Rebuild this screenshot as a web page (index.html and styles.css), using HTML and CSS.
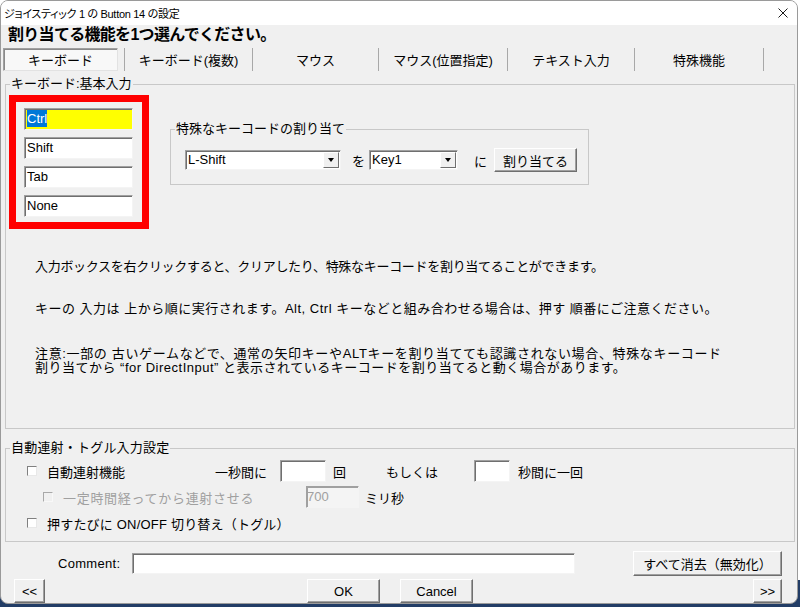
FILE: index.html
```html
<!DOCTYPE html>
<html lang="ja">

<head>
    <meta charset="UTF-8">
    <title>ジョイスティック 1 の Button 14 の設定</title>
    <link rel="stylesheet" href="styles.css">
</head>

<body>
    <div class="window">
        <div class="titlebar">
            <span class="title">ジョイスティック 1 の Button 14 の設定</span>
            <svg class="close" width="10" height="10" viewBox="0 0 10 10">
                <path d="M0.5 0.5 L9.5 9.5 M9.5 0.5 L0.5 9.5" stroke="#1a1a1a" stroke-width="1" fill="none" />
            </svg>
        </div>
        <div class="client">
            <h1 class="lead">割り当てる機能を1つ選んでください。</h1>
            <div class="tabs">
                <div class="tab selected"><span>キーボード</span></div>
                <div class="tab"><span>キーボード(複数)</span></div>
                <div class="tab"><span>マウス</span></div>
                <div class="tab"><span>マウス(位置指定)</span></div>
                <div class="tab"><span>テキスト入力</span></div>
                <div class="tab"><span>特殊機能</span></div>
            </div>

            <fieldset class="group main">
                <legend>キーボード:基本入力</legend>
                <div class="top_row">
                    <div class="keys">
                        <div class="field key hl"><span class="sel">Ctrl</span></div>
                        <div class="field key">Shift</div>
                        <div class="field key">Tab</div>
                        <div class="field key">None</div>
                    </div>
                    <fieldset class="group special">
                        <legend>特殊なキーコードの割り当て</legend>
                        <div class="assign">
                            <div class="field combo wide">L-Shift<span class="drop"><i></i></span></div>
                            <span class="wo">を</span>
                            <div class="field combo narrow">Key1<span class="drop"><i></i></span></div>
                            <span class="ni">に</span>
                            <button class="btn assign_btn">割り当てる</button>
                        </div>
                    </fieldset>
                </div>
                <p class="note n1">入力ボックスを右クリックすると、クリアしたり、特殊なキーコードを割り当てることができます。</p>
                <p class="note n2">キーの 入力は 上から順に実行されます。Alt, Ctrl キーなどと組み合わせる場合は、押す 順番にご注意ください。</p>
                <p class="note n3">注意:一部の 古いゲームなどで、通常の矢印キーやALTキーを割り当てても認識されない場合、特殊なキーコード<br><span class="tail">割り当てから “for DirectInput” と表示されているキーコードを割り当てると動く場合があります。</span></p>
            </fieldset>

            <fieldset class="group rapid">
                <legend>自動連射・トグル入力設定</legend>
                <div class="rrow">
                    <label class="chk c1"><span class="cb"></span>自動連射機能</label>
                    <span class="per_sec">一秒間に</span>
                    <div class="field num n_a"></div>
                    <span class="kai">回</span>
                    <span class="or">もしくは</span>
                    <div class="field num n_b"></div>
                    <span class="once">秒間に一回</span>
                </div>
                <div class="rrow">
                    <label class="chk c2 off"><span class="cb"></span>一定時間経ってから連射させる</label>
                    <div class="field num n_c off">700</div>
                    <span class="ms">ミリ秒</span>
                </div>
                <div class="rrow">
                    <label class="chk c3"><span class="cb"></span>押すたびに ON/OFF 切り替え（トグル）</label>
                </div>
            </fieldset>

            <div class="comment_row">
                <span class="comment_label">Comment:</span>
                <div class="field comment"></div>
                <button class="btn clear_btn">すべて消去（無効化）</button>
            </div>
            <div class="nav_row">
                <button class="btn prev">&lt;&lt;</button>
                <button class="btn ok">OK</button>
                <button class="btn cancel">Cancel</button>
                <button class="btn next">&gt;&gt;</button>
            </div>
        </div>
    </div>
</body>

</html>
```

FILE: styles.css
```css
* {
    margin: 0;
    padding: 0;
    box-sizing: border-box;
}

html,
body {
    width: 800px;
    height: 607px;
    overflow: hidden;
}

body {
    background: linear-gradient(to bottom, #ffffff 0, #ffffff 580px, #223d66 580px);
    font-family: "Liberation Sans", "Noto Sans CJK JP", sans-serif;
    font-size: 13px;
    color: #000;
}

.window {
    width: 798px;
    height: 604px;
    border: 1px solid #9a9a9a;
    border-radius: 8px;
    overflow: hidden;
    background: #f0f0f0;
    display: flex;
    flex-direction: column;
}

.titlebar {
    height: 24px;
    flex: none;
    background: #fff;
    display: flex;
    align-items: center;
    justify-content: space-between;
    padding: 0 9px 0 3px;
    font-size: 11px;
    letter-spacing: -0.3px;
    font-feature-settings: "palt";
}

.lead {
    font-size: 16px;
    font-weight: bold;
    line-height: 20px;
    padding-left: 7px;
    letter-spacing: -0.7px;
}

/* tabs */
.tabs {
    display: grid;
    grid-template-columns: 124px 128px 126px 129px 127px 129px;
    height: 23px;
    margin-top: 3px;
}

.tab {
    border-right: 1px solid #a8a8a8;
    display: flex;
    align-items: center;
    justify-content: center;
}

.tab.selected {
    justify-content: flex-start;
}

.tab.selected span {
    width: 115px;
    height: 23px;
    margin-left: 2px;
    margin-right: 5px;
    display: flex;
    align-items: center;
    justify-content: center;
    background: #f8f8f8;
    border: 1px solid;
    border-color: #a0a0a0 #e2e2e2 #e2e2e2 #a0a0a0;
    box-shadow: inset 1px 1px 0 #8a8a8a;
}

/* group boxes */
.group {
    border: 1px solid #c8c8c8;
    min-width: 0;
}

.group legend {
    margin-left: 4px;
    padding: 0 1px;
    line-height: 14px;
}

.main {
    margin: 6px 2px 0 4px;
    height: 352px;
}

.top_row {
    display: flex;
    align-items: flex-start;
}

.keys {
    margin: 4px 0 0 3px;
    width: 140px;
    height: 134px;
    border: 7px solid #ff0000;
    padding: 6px 0 0 8px;
    display: flex;
    flex-direction: column;
    gap: 7px;
}

.field {
    background: #fff;
    border: 1px solid;
    border-color: #a0a0a0 #f4f4f4 #f4f4f4 #a0a0a0;
    box-shadow: inset 1px 1px 0 #6f6f6f;
}

.key {
    width: 109px;
    height: 22px;
    line-height: 20px;
    padding-left: 2px;
}

.key.hl {
    background: #ffff00;
}

.sel {
    background: #0078d7;
    color: #fff;
    padding: 1px 0;
}

.special {
    margin: 31px 0 0 21px;
    width: 419px;
    height: 63px;
}

.assign {
    display: flex;
    align-items: center;
    margin: 12px 0 0 14px;
}

.combo {
    height: 20px;
    line-height: 18px;
    padding-left: 2px;
    position: relative;
}

.combo.wide {
    width: 156px;
}

.combo.narrow {
    width: 89px;
}

.drop {
    position: absolute;
    right: 1px;
    top: 1px;
    width: 16px;
    height: 16px;
    background: #f0f0f0;
    border: 1px solid;
    border-color: #fff #6f6f6f #6f6f6f #fff;
    display: flex;
    align-items: center;
    justify-content: center;
}

.drop i {
    width: 0;
    height: 0;
    border-left: 3.5px solid transparent;
    border-right: 3.5px solid transparent;
    border-top: 4px solid #000;
}

.wo {
    margin: 0 4px 0 11px;
}

.ni {
    margin: 0 7px 0 16px;
}

.btn {
    font: inherit;
    color: #000;
    background: #f0f0f0;
    border: 1px solid;
    border-color: #fff #6f6f6f #6f6f6f #fff;
    box-shadow: inset -1px -1px 0 #a0a0a0;
}

.assign_btn {
    width: 83px;
    height: 24px;
}

.note {
    margin-left: 29px;
    line-height: 16px;
}

.n1 {
    margin-top: 30px;
    letter-spacing: -0.3px;
}

.n2 {
    margin-top: 26px;
    letter-spacing: 0.5px;
}

.n3 {
    margin-top: 30px;
    line-height: 14px;
    letter-spacing: 0.65px;
}

.n3 .tail {
    letter-spacing: 0.5px;
}

/* rapid fire */
.rapid {
    margin: 12px 2px 0 4px;
    height: 101px;
}

.rapid legend {
    letter-spacing: 0.2px;
}

.rrow {
    display: flex;
    align-items: center;
    height: 22px;
    margin-top: 4px;
}

.rrow:first-of-type {
    margin-top: 5px;
}

.chk {
    display: flex;
    align-items: center;
    white-space: nowrap;
}

.chk.c1 {
    padding-left: 21px;
    width: 209px;
}

.chk.c2 {
    padding-left: 37px;
    width: 300px;
    letter-spacing: 0.7px;
}

.chk.c3 {
    padding-left: 21px;
    letter-spacing: 0.2px;
}

.cb {
    width: 10px;
    height: 10px;
    margin-right: 10px;
    background: #fff;
    border: 1px solid;
    border-color: #808080 #e8e8e8 #e8e8e8 #808080;
}

.off {
    color: #a0a0a0;
}

.off .cb {
    background: #f0f0f0;
    border-color: #a8a8a8 #f8f8f8 #f8f8f8 #a8a8a8;
}

.num {
    height: 22px;
}

.per_sec {
    width: 65px;
}

.n_a {
    width: 46px;
}

.kai {
    margin-left: 7px;
    width: 53px;
}

.or {
    width: 88px;
}

.n_b {
    width: 36px;
}

.once {
    margin-left: 8px;
}

.n_c {
    width: 53px;
    line-height: 20px;
    letter-spacing: 0;
    background: #f4f4f4;
    box-shadow: inset 1px 1px 0 #a0a0a0;
}

.ms {
    margin-left: 6px;
}

/* bottom */
.comment_row {
    display: flex;
    align-items: center;
    height: 25px;
    margin-top: 9px;
}

.comment_label {
    margin-left: 57px;
    width: 74px;
    letter-spacing: 0.3px;
}

.comment {
    width: 443px;
    height: 21px;
}

.clear_btn {
    margin-left: 58px;
    width: 149px;
    height: 25px;
}

.nav_row {
    display: flex;
    height: 24px;
    margin-top: 3px;
}

.nav_row .btn {
    height: 24px;
}

.prev {
    margin-left: 13px;
    width: 31px;
}

.ok {
    margin-left: 262px;
    width: 73px;
}

.cancel {
    margin-left: 20px;
    width: 73px;
}

.next {
    margin-left: auto;
    margin-right: 15px;
    width: 29px;
}
```
